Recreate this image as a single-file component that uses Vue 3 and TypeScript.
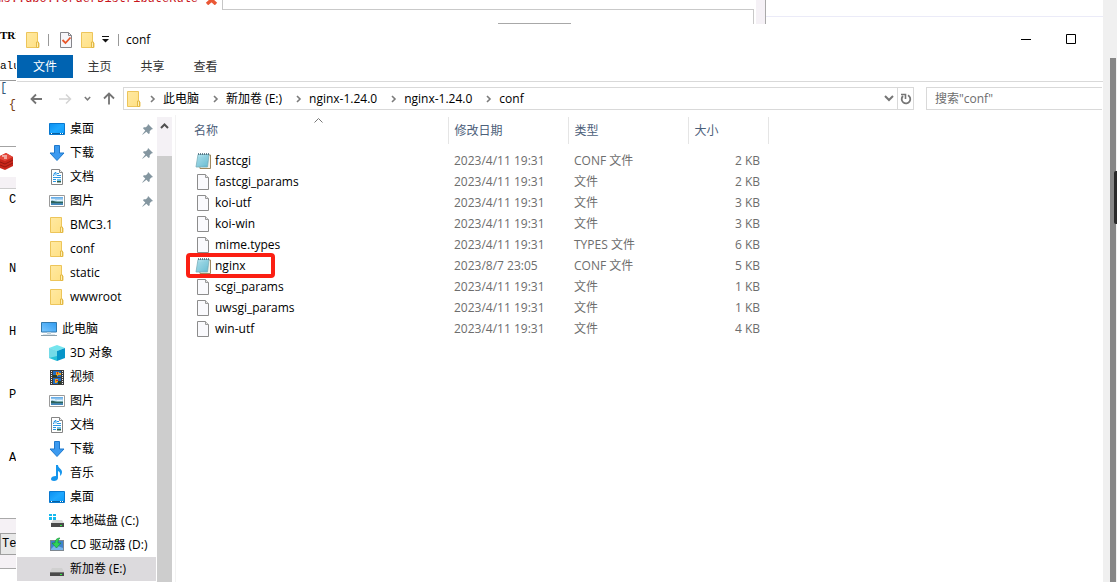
<script setup lang="ts">
import { ref } from 'vue'

interface TreeItem {
  label: string
  icon: string
  pinned?: boolean
  root?: boolean
  selected?: boolean
}
interface FileRow {
  name: string
  icon: string
  date: string
  type: string
  size: string
  marked?: boolean
}

const crumbs = ['此电脑', '新加卷 (E:)', 'nginx-1.24.0', 'nginx-1.24.0', 'conf']
const tabs = ['主页', '共享', '查看']
const query = ref('')

const tree: TreeItem[] = [
  { label: '桌面', icon: 'desktop', pinned: true },
  { label: '下载', icon: 'download', pinned: true },
  { label: '文档', icon: 'document', pinned: true },
  { label: '图片', icon: 'picture', pinned: true },
  { label: 'BMC3.1', icon: 'folder' },
  { label: 'conf', icon: 'folder' },
  { label: 'static', icon: 'folder' },
  { label: 'wwwroot', icon: 'folder' },
  { label: '此电脑', icon: 'computer', root: true },
  { label: '3D 对象', icon: 'cube' },
  { label: '视频', icon: 'video' },
  { label: '图片', icon: 'picture' },
  { label: '文档', icon: 'document' },
  { label: '下载', icon: 'download' },
  { label: '音乐', icon: 'music' },
  { label: '桌面', icon: 'desktop' },
  { label: '本地磁盘 (C:)', icon: 'system-drive' },
  { label: 'CD 驱动器 (D:)', icon: 'cd-drive' },
  { label: '新加卷 (E:)', icon: 'drive', selected: true },
]

const plain = (name: string, size: string, type = '文件'): FileRow => ({
  name, size, type, icon: 'file', date: '2023/4/11 19:31',
})
const files: FileRow[] = [
  { name: 'fastcgi', icon: 'notepad', date: '2023/4/11 19:31', type: 'CONF 文件', size: '2 KB' },
  plain('fastcgi_params', '2 KB'),
  plain('koi-utf', '3 KB'),
  plain('koi-win', '3 KB'),
  plain('mime.types', '6 KB', 'TYPES 文件'),
  { name: 'nginx', icon: 'notepad', date: '2023/8/7 23:05', type: 'CONF 文件', size: '5 KB', marked: true },
  plain('scgi_params', '1 KB'),
  plain('uwsgi_params', '1 KB'),
  plain('win-utf', '4 KB'),
]
</script>

<template>
  <div class="screen">
    <svg class="defs" width="0" height="0" aria-hidden="true">
      <defs>
        <linearGradient id="g-blue" x1="0" y1="0" x2="1" y2="1">
          <stop offset="0" stop-color="#0a8ff0" /><stop offset=".5" stop-color="#1fa8ff" /><stop offset="1" stop-color="#0a9bfa" />
        </linearGradient>
        <linearGradient id="g-sky" x1="0" y1="0" x2="0" y2="1">
          <stop offset="0" stop-color="#5aa5e6" /><stop offset=".5" stop-color="#d4ecf8" /><stop offset=".6" stop-color="#4a8a86" /><stop offset="1" stop-color="#3f83c4" />
        </linearGradient>
        <linearGradient id="g-screen" x1="0" y1="1" x2="1" y2="0">
          <stop offset="0" stop-color="#7cc8ff" /><stop offset="1" stop-color="#2f9bf0" />
        </linearGradient>
        <linearGradient id="g-note" x1="0" y1="0" x2="1" y2="1">
          <stop offset="0" stop-color="#b9e6f0" /><stop offset="1" stop-color="#5db4cc" />
        </linearGradient>
        <linearGradient id="g-folder" x1="0" y1="0" x2="1" y2="1">
          <stop offset="0" stop-color="#ffe9a2" /><stop offset="1" stop-color="#ffe083" />
        </linearGradient>
      </defs>
      <symbol id="i-folder" viewBox="0 0 16 16">
        <path d="M1.500.5h11v10.500h1.500v4.500h-12.500z" fill="url(#g-folder)" stroke="#edc55a" />
        <path d="M11.500 15.500v-5.500h2v5.500z" fill="#fff0b8" stroke="#e3b945" />
      </symbol>
      <symbol id="i-desktop" viewBox="0 0 16 16">
        <path d="M.5 2.500h15v11h-15z" fill="url(#g-blue)" stroke="#0878cf" />
        <path d="M1 12.500h14" stroke="#075f9f" /><path d="M2 12.500h1M11 12.500h1M13 12.500h1" stroke="#fff" />
      </symbol>
      <symbol id="i-download" viewBox="0 0 16 16">
        <path d="M5.500.5h5v7.500h4.500L8 15.500 1 8h4.500z" fill="#3b9af0" stroke="#1f78cc" />
      </symbol>
      <symbol id="i-document" viewBox="0 0 16 16">
        <path d="M2.500.5h8l3 3v12h-11z" fill="#fff" stroke="#858585" />
        <path d="M10.500.5v3h3" fill="#eee" stroke="#858585" />
        <path d="M4 6.500h1V4.500h1V3.500h1v3M8 4.500h2M8 6.500h4M4 8.500h8M4 10.500h3M4 12.500h3" fill="none" stroke="#2a97e4" />
        <path d="M8 10h4v2H8z" fill="#6fc0ea" /><path d="M8 12h4v1.500H8z" fill="#315f4b" />
      </symbol>
      <symbol id="i-picture" viewBox="0 0 16 16">
        <path d="M.5 2.500h15v11h-15z" fill="#fff" stroke="#9a9a9a" />
        <path d="M2 4h12v8H2z" fill="url(#g-sky)" />
        <path d="M2 8c3-1 4 1 6 1s4 0 6 0v1H2z" fill="#2d625d" /><path d="M2 6.500h4M8 7.500h5" stroke="#eaf7ff" opacity=".8" />
      </symbol>
      <symbol id="i-computer" viewBox="0 0 16 16">
        <path d="M.5 1.500h15v9.500h-15z" fill="url(#g-screen)" stroke="#3279ad" />
        <path d="M6 11h4v2H6z" fill="#bfd2dd" /><path d="M0 14.500h16" stroke="#8b9fab" /><path d="M2 13.500h12" stroke="#dce5ea" />
      </symbol>
      <symbol id="i-cube" viewBox="0 0 16 16">
        <path d="M0 3 8 0l8 3-8 3z" fill="#75e5ee" /><path d="M0 3l8 3v10l-8-3z" fill="#27c1d8" /><path d="M8 6l8-3v10l-8 3z" fill="#0795c9" />
        <path d="M0 3l8 3v5l-8 2z" fill="#b5f1f5" opacity=".55" />
      </symbol>
      <symbol id="i-video" viewBox="0 0 16 16">
        <path d="M1 1h14v15H1z" fill="#3c3c3c" />
        <path d="M2.500 2v13M13.500 2v13" stroke="#eee" stroke-dasharray="1 1" />
        <path d="M4 2h8v6H4zM4 9h8v6H4z" fill="#226cc0" />
        <path d="M7 3h3v1h2v2H9v1H7zM6 10h3v2h3v1H8v1H6z" fill="#eda51d" /><path d="M4 6h4v2H4zM9 12h3v3H9z" fill="#293f25" /><path d="M8 3h1v2H8zM7 11h2v1H7z" fill="#d32e1c" />
      </symbol>
      <symbol id="i-music" viewBox="0 0 16 16">
        <path d="M7 0h2c0 3 4 4 4 7 0 2-1 3-2 4 .5-3 0-4-2-5v7c0 2-2 3-4 3s-3-1-3-2c0-2 2-3 5-3z" fill="#1595ed" />
      </symbol>
      <symbol id="i-drive" viewBox="0 0 16 16">
        <path d="M3 7h10l2 4H1z" fill="#d0d0d0" /><path d="M1 11h14v4H1z" fill="#4a4a4a" /><path d="M1 11.500h14" stroke="#777" /><path d="M11 13h2v1h-2z" fill="#35ed45" />
      </symbol>
      <symbol id="i-system-drive" viewBox="0 0 16 16">
        <path d="M0 1h3v2H0zM4 1h3v2H4zM0 4h3v3H0zM4 4h3v3H4z" fill="#15b9ee" />
        <path d="M4 7h9l2 3H2z" fill="#d8d8d8" /><path d="M2 10h13v4H2z" fill="#4a4a4a" /><path d="M11 12h2v1h-2z" fill="#35ed45" />
      </symbol>
      <symbol id="i-cd-drive" viewBox="0 0 16 16">
        <path d="M1 3h14v11H1z" fill="#7d8790" /><path d="M2 4h12v9H2z" fill="#3f83cc" /><path d="M2 12l4-4 8 3v2H2z" fill="#77b5ec" />
        <path d="M3 6h3c0-4 3-5 5-5-1 1-2 2-2 5h3l-4.500 5z" fill="#2fd457" stroke="#148a30" stroke-width=".6" />
      </symbol>
      <symbol id="i-file" viewBox="0 0 16 16">
        <path d="M2.500.5h8l3 3v12h-11z" fill="#fafafd" stroke="#8c8c8c" /><path d="M10.500.5v3h3" fill="#e4e4e4" stroke="#9a9a9a" />
      </symbol>
      <symbol id="i-notepad" viewBox="0 0 16 16">
        <path d="M4 2h11.500v13.500H5z" fill="#f5f2e8" stroke="#a08a5f" />
        <path d="M3 1.500h11L12.500 14H1z" fill="url(#g-note)" stroke="#78aeba" stroke-width=".8" />
        <path d="M3 5h10M3 7h10M2 9h10M2 11h10" stroke="#8cd0df" stroke-width=".6" />
        <path d="M3.500 0v2M5.500 0v2M7.500 0v2M9.500 0v2M11.500 0v2M13.500 0v2" stroke="#467" stroke-width=".8" />
      </symbol>
      <symbol id="i-pin" viewBox="0 0 10 10">
        <path d="M5.500 0 10 4.500 8.500 5 7 6.500V8.500L6 9 4 7 .5 9.700.2 9.500 3 6 1 4l.5-1h2L5 1.500z" fill="#8496a0" />
      </symbol>
      <symbol id="i-chevron" viewBox="0 0 8 8">
        <path d="M2 1l3 3-3 3" fill="none" stroke="#7b7b7b" stroke-width="1.600" />
      </symbol>
    </svg>

    <div class="top-strip">
      <div class="query-tab">
        <span class="query-name">oms..dbo..OrderDistributeRule</span>
        <svg class="cross" width="13" height="10" viewBox="0 0 13 10"><path d="M2 1l9 8M11 1L2 9" stroke="#ea5836" stroke-width="3.500" /></svg>
      </div>
      <div class="query-pane"><i class="grip"></i></div>
      <div class="pane-edge"></div>
      <div class="pane-rest"></div>
    </div>

    <div class="left-strip">
      <b class="strip-title">TRI</b>
      <span class="strip-value">alu</span>
      <div class="strip-code"><span>[</span><span class="brace">{</span></div>
      <div class="strip-icon">
        <svg width="14" height="18" viewBox="0 0 14 18">
          <path d="M0 3 6 0l7 4v9l-8 4-5-2z" fill="#c9261b" /><path d="M0 3 6 0l7 4-8 4-5-2z" fill="#e4483b" />
          <path d="M0 9l5 2 8-4M0 12l5 2 8-4" fill="none" stroke="#951810" /><path d="M2 3h3M6 2v2M4 5h3" stroke="#fff" />
        </svg>
      </div>
      <div class="strip-band"></div>
      <span class="mark first">C</span>
      <span class="mark">N</span>
      <span class="mark">H</span>
      <span class="mark">P</span>
      <span class="mark">A</span>
      <div class="strip-foot"><button type="button" class="test">Te</button></div>
    </div>

    <main class="window">
      <header class="titlebar">
        <svg class="ico" width="16" height="16"><use href="#i-folder" /></svg>
        <i class="bar"></i>
        <button type="button" class="bare" aria-label="属性">
          <svg width="16" height="16" viewBox="0 0 16 16">
            <path d="M2.500.5h8l3 3v12h-11z" fill="#f6f6fa" stroke="#85858a" /><path d="M10.500.5v3h3" fill="none" stroke="#85858a" />
            <path d="M4.500 8l3 3 5-5.500" fill="none" stroke="#e8562a" stroke-width="1.800" />
          </svg>
        </button>
        <button type="button" class="bare fold" aria-label="新建文件夹"><svg class="ico" width="16" height="16"><use href="#i-folder" /></svg></button>
        <button type="button" class="bare" aria-label="自定义快速访问工具栏">
          <svg width="8" height="7" viewBox="0 0 8 7"><path d="M0 .5h7" stroke="#111" /><path d="M0 3h7L3.500 6.500z" fill="#111" /></svg>
        </button>
        <i class="bar"></i>
        <h1 class="title">conf</h1>
        <div class="controls">
          <button type="button" class="bare" aria-label="最小化"><svg width="11" height="11"><path d="M0 5.500h10" stroke="#000" /></svg></button>
          <button type="button" class="bare" aria-label="最大化"><svg width="11" height="11"><path d="M.5.5h9v9h-9z" fill="none" stroke="#000" /></svg></button>
        </div>
      </header>

      <nav class="tabs">
        <button type="button" class="tab file">文件</button>
        <button v-for="t in tabs" :key="t" type="button" class="tab">{{ t }}</button>
      </nav>

      <div class="address-row">
        <div class="nav-buttons">
          <button type="button" class="bare" aria-label="后退"><svg width="13" height="12" viewBox="0 0 13 12"><path d="M12 6H1.500M6 1.500 1.500 6 6 10.500" fill="none" stroke="#747474" stroke-width="1.800" /></svg></button>
          <button type="button" class="bare forward" aria-label="前进"><svg width="13" height="12" viewBox="0 0 13 12"><path d="M0 6h11M7 1.500 11.500 6 7 10.500" fill="none" stroke="#d4d4d4" stroke-width="1.500" /></svg></button>
          <button type="button" class="bare" aria-label="最近浏览的位置"><svg width="7" height="6" viewBox="0 0 7 6"><path d="M.8 1 3.500 3.800 6.200 1" fill="none" stroke="#7b7b7b" stroke-width="1.500" /></svg></button>
          <button type="button" class="bare" aria-label="上移"><svg width="12" height="13" viewBox="0 0 12 13"><path d="M6 12.500V1.500M1 6.500l5-5 5 5" fill="none" stroke="#747474" stroke-width="1.800" /></svg></button>
        </div>
        <div class="address">
          <svg class="ico" width="16" height="16"><use href="#i-folder" /></svg>
          <template v-for="(c, i) in crumbs" :key="i">
            <svg class="chev" width="8" height="8"><use href="#i-chevron" /></svg>
            <button type="button" class="crumb">{{ c }}</button>
          </template>
          <button type="button" class="bare drop" aria-label="以前的位置"><svg width="10" height="7" viewBox="0 0 10 7"><path d="M1 1l4 4 4-4" fill="none" stroke="#757575" stroke-width="2" /></svg></button>
          <button type="button" class="bare refresh" aria-label="刷新"><svg width="12" height="12" viewBox="0 0 12 12"><path d="M8 2.300A4.300 4.300 0 1 1 3 3" fill="none" stroke="#757575" stroke-width="1.800" /><path d="M1 1.500h4.500V6" fill="none" stroke="#757575" stroke-width="1.600" /></svg></button>
        </div>
        <input v-model="query" class="search" type="text" aria-label="搜索" placeholder='搜索"conf"' />
      </div>

      <div class="body">
        <ul class="tree">
          <li v-for="(n, i) in tree" :key="i" :class="{ root: n.root }">
            <button type="button" class="node" :class="{ selected: n.selected, top: n.root }">
              <svg class="ico" width="16" height="16"><use :href="'#i-' + n.icon" /></svg>
              <span>{{ n.label }}</span>
              <svg v-if="n.pinned" class="pin" width="11" height="11"><use href="#i-pin" /></svg>
            </button>
          </li>
        </ul>
        <div class="scroll">
          <svg width="9" height="7" viewBox="0 0 9 7"><path d="M1 5l3.500-3.500L8 5" fill="none" stroke="#505050" stroke-width="2" /></svg>
          <div class="thumb"></div>
        </div>
        <section class="list">
          <table class="files">
            <colgroup><col class="c-name" /><col class="c-date" /><col class="c-date" /><col class="c-size" /></colgroup>
            <thead>
              <tr>
                <th>
                  <span class="sorted">名称
                    <svg class="sort" width="9" height="5" viewBox="0 0 9 5"><path d="M.5 4.500l4-4 4 4" fill="none" stroke="#777" /></svg>
                  </span>
                </th>
                <th>修改日期</th><th>类型</th><th>大小</th>
              </tr>
            </thead>
            <tbody>
              <tr v-for="f in files" :key="f.name">
                <td>
                  <span class="name">
                    <svg class="ico" width="16" height="16"><use :href="'#i-' + f.icon" /></svg>
                    {{ f.name }}
                    <i v-if="f.marked" class="marker"></i>
                  </span>
                </td>
                <td>{{ f.date }}</td><td>{{ f.type }}</td><td class="size">{{ f.size }}</td>
              </tr>
            </tbody>
          </table>
        </section>
      </div>
    </main>

    <div class="page-scroll">
      <div class="page-thumb"></div>
      <i class="handle"></i>
    </div>
  </div>
</template>

<style>
body { margin: 0; background: #fff; }
</style>

<style scoped>
.screen {
  display: grid;
  grid-template-columns: 17px minmax(0, 1fr) 14px;
  grid-template-rows: 24px auto;
  height: 100vh;
  overflow: hidden;
  color: #000;
  font: 12px/20px "Open Sans", "Noto Sans CJK SC", sans-serif;
}
.defs { position: absolute; }
svg { display: block; flex: none; }
button, input { font: inherit; color: inherit; }
button { padding: 0; border: 0; background: none; }
ul { list-style: none; margin: 0; padding: 0; }

.top-strip { grid-column: 1 / 3; display: flex; overflow: hidden; }
.query-tab { width: 223px; display: flex; align-items: flex-start; border-right: 1px solid #c6c6c6; box-sizing: border-box; height: 10px; overflow: hidden; }
.query-name { width: 198px; height: 6px; display: flex; justify-content: flex-end; align-items: flex-end; color: #c8161d; font: 12px/14px "Liberation Mono", monospace; white-space: nowrap; }
.cross { margin: -5px 0 0 7px; }
.query-pane { width: 530px; height: 14px; margin-top: 9px; border: 1px solid #c9c9c9; border-width: 1px 1px 0 0; display: flex; align-items: flex-end; justify-content: center; }
.grip { width: 73px; height: 1px; margin-left: 92px; background: #a8a8a8; }
.pane-edge { width: 9px; margin-left: 2px; background: #f5f1f6; border-right: 1px solid #a9a9a9; }
.pane-rest { flex: 1; height: 16px; border-bottom: 1px solid #ebebf8; }

.left-strip { grid-column: 1; grid-row: 2; width: 16px; display: flex; flex-direction: column; overflow: hidden; font: 12px/14px "Liberation Mono", monospace; }
.strip-title { height: 35px; font: bold 11px/22px "Liberation Serif", serif; }
.strip-value { height: 21px; font-size: 11px; border-bottom: 1px solid #999; }
.strip-code { height: 65px; border-bottom: 1px solid #a3a3a3; color: #357; display: flex; flex-direction: column; }
.brace { align-self: flex-end; margin-top: 3px; color: #753d10; }
.strip-icon { height: 30px; display: flex; align-items: center; }
.strip-band { height: 11px; background: #f5f1f5; border-bottom: 1px solid #ccc; }
.mark { margin-left: 9px; height: 63px; flex: none; }
.mark.first { height: 73px; padding-top: 4px; box-sizing: border-box; }
.strip-foot { height: 49px; margin-top: 4px; background: #f5f1f5; border: solid #a9a9a9; border-width: 1px 0; display: flex; align-items: center; flex: none; }
.test { width: 24px; height: 22px; border: 1px solid #a0a0a0; background: #e8e8e8; text-align: left; padding-left: 1px; flex: none; }

.window { grid-column: 2; grid-row: 2; display: flex; flex-direction: column; min-height: 0; background: #fff; }
.titlebar { height: 31px; display: flex; align-items: center; padding-left: 8px; flex: none; }
.bar { width: 1px; height: 12px; background: #999; }
.titlebar > .bar:nth-of-type(1) { margin: 0 9px 0 7px; }
.titlebar > .bar:nth-of-type(2) { margin: 0 7px 0 8px; }
.fold { margin: 0 6px; }
.title { margin: 0; font-size: 12px; font-weight: 400; }
.controls { margin-left: auto; display: flex; gap: 34px; padding-right: 26px; }
.tabs { height: 26px; display: flex; align-items: flex-start; border-bottom: 1px solid #d9d9d9; flex: none; }
.tab { width: 53px; height: 23px; color: #333; line-height: 24px; }
.tab.file { width: 56px; background: #0063b1; color: #fff; }

.address-row { height: 33px; display: flex; align-items: center; flex: none; }
.nav-buttons { width: 106px; display: flex; align-items: center; gap: 12px; padding-left: 13px; box-sizing: border-box; }
.forward { margin-left: 4px; }
.address { flex: 1; height: 23px; box-sizing: border-box; border: 1px solid #d9d9d9; display: flex; align-items: center; padding-left: 2px; }
.chev { margin: 0 6px 0 7px; }
.crumb { white-space: nowrap; margin-right: 6px; }
.drop { margin-left: auto; margin-right: 3px; }
.refresh { width: 16px; height: 21px; border-left: 1px solid #d9d9d9; display: flex; align-items: center; justify-content: center; }
.search { width: 176px; height: 23px; box-sizing: border-box; margin-left: 12px; margin-right: 1px; border: 1px solid #d9d9d9; border-right: 0; padding: 0 0 0 8px; border-radius: 0; outline: 0; background: #fff; }
.search::placeholder { color: #6d6d6d; opacity: 1; }

.body { flex: 1; display: flex; min-height: 0; }
.tree { width: 140px; padding-top: 2px; flex: none; }
.root { margin-top: 8px; }
.node { width: 139px; height: 24px; display: flex; align-items: center; gap: 5px; padding-left: 32px; text-align: left; white-space: nowrap; }
.node.top { padding-left: 24px; }
.node.selected { background: #dcdadd; }
.pin { margin-left: auto; margin-right: 3px; }
.scroll { width: 15px; margin-top: 2px; background: #f4f1f5; display: flex; flex-direction: column; align-items: center; }
.scroll > svg { margin: 6px 0; height: 7px; }
.thumb { flex: 1; width: 15px; margin-top: 20px; background: #cdcdcd; }
.list { flex: 1; margin-left: 3px; border-left: 1px solid #f3f3f3; padding: 2px 0 0 10px; }
.files { table-layout: fixed; width: 582px; border-collapse: collapse; color: #6d6d6d; }
.c-name { width: 262px; }
.c-date { width: 120px; }
.c-size { width: 80px; }
th { height: 27px; padding: 0 0 0 6px; border-right: 1px solid #e5e5e5; color: #4c607a; font-weight: 400; text-align: left; }
th:first-child { padding-left: 8px; }
td { height: 21px; padding: 0 0 0 6px; line-height: 21px; white-space: nowrap; }
td:first-child { padding-left: 9px; color: #000; }
tbody::before { content: ""; display: block; height: 6px; }
td.size { padding-right: 8px; text-align: right; }
.sorted { position: relative; display: block; }
.sort { position: absolute; left: 120px; top: -3px; }
.name { position: relative; display: flex; align-items: center; gap: 4px; height: 21px; }
.marker { position: absolute; left: -9px; top: -2px; width: 81px; height: 17px; border: 4px solid #fb1f13; border-radius: 4px; }

.page-scroll { grid-column: 3; grid-row: 1 / 3; position: relative; display: flex; background: #f0f0f0; padding: 58px 1px 0 7px; }
.page-thumb { flex: 1; background: #868686; }
.handle { position: absolute; right: 0; top: 171px; width: 3px; height: 53px; background: #292929; border-radius: 2px 0 0 2px; }
</style>
